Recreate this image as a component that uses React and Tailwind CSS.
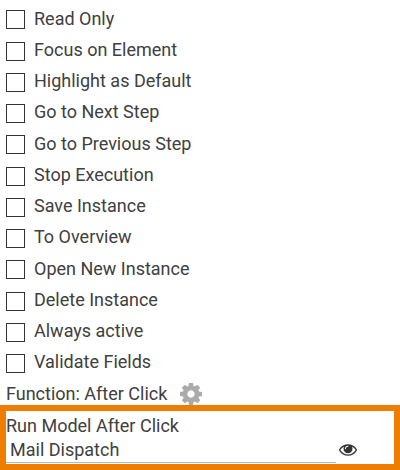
const options = [
  "Read Only",
  "Focus on Element",
  "Highlight as Default",
  "Go to Next Step",
  "Go to Previous Step",
  "Stop Execution",
  "Save Instance",
  "To Overview",
  "Open New Instance",
  "Delete Instance",
  "Always active",
  "Validate Fields",
];

function GearIcon() {
  return (
    <svg viewBox="128 128 1536 1536" className="mt-[4px] ml-[13px] h-[22px] w-[22px] shrink-0 fill-[#ababab]">
      <path d="M1152 896q0-106-75-181t-181-75-181 75-75 181 75 181 181 75 181-75 75-181zm512-109v222q0 12-8 23t-20 13l-185 28q-19 54-39 91 35 50 107 138 10 12 10 25t-9 23q-27 37-99 108t-94 71q-12 0-26-9l-138-108q-44 23-91 38-16 136-29 186-7 28-36 28h-222q-14 0-24.500-8.500t-11.500-21.500l-28-184q-49-16-90-37l-141 107q-10 9-25 9-14 0-25-11-126-114-165-168-7-10-7-23 0-12 8-23 15-21 51-66.500t54-70.500q-27-50-41-99l-183-27q-13-2-21-12.500t-8-23.500v-222q0-12 8-23t19-13l186-28q14-46 39-92-40-57-107-138-10-12-10-24 0-10 9-23 26-36 98.500-107.500t94.500-71.500q13 0 26 10l138 107q44-23 91-38 16-136 29-186 7-28 36-28h222q14 0 24.500 8.500t11.500 21.500l28 184q49 16 90 37l142-107q9-9 24-9 13 0 25 10 129 119 165 170 7 8 7 22 0 12-8 23-15 21-51 66.500t-54 70.500q26 50 41 98l183 28q13 2 21 12.500t8 23.500z" />
    </svg>
  );
}

function EyeIcon() {
  return (
    <svg viewBox="0 384 1792 1152" className="mt-[6px] ml-[3px] h-[12px] w-[18px] shrink-0 fill-[#333333]">
      <path d="M1664 960q-152-236-381-353 61 104 61 225 0 185-131.500 316.500t-316.500 131.500-316.500-131.500-131.500-316.500q0-121 61-225-229 117-381 353 133 205 333.500 326.500t434.500 121.500 434.500-121.500 333.500-326.500zm-720-384q0-20-14-34t-34-14q-125 0-214.500 89.500t-89.500 214.500q0 20 14 34t34 14 34-14 14-34q0-86 61-147t147-61q20 0 34-14t14-34zm848 384q0 34-20 69-140 230-376.500 368.500t-499.500 138.500-499.500-139-376.500-368q-20-35-20-69t20-69q140-229 376.500-368t499.500-139 499.500 139 376.500 368q20 35 20 69z" />
    </svg>
  );
}

export default function App() {
  return (
    <div className="flex h-[470px] w-[400px] flex-col overflow-hidden bg-white font-['Roboto',sans-serif] text-[18px] leading-[24px] text-[#404040]">
      <div className="flex h-[379px] shrink-0 flex-col pt-[6.6px] pl-[6px]">
        {options.map((label) => (
          <label key={label} className="flex h-[31.25px] shrink-0 items-start">
            <span className="mt-[3.8px] h-[19px] w-[19px] shrink-0 border border-[#333333] bg-white" />
            <span className="ml-[9px] whitespace-nowrap">{label}</span>
          </label>
        ))}
      </div>
      <div className="flex h-[26px] shrink-0 items-start pl-[6px]">
        <span className="mt-[3px] whitespace-nowrap">Function: After Click</span>
        <GearIcon />
      </div>
      <div className="flex h-[65px] shrink-0 flex-col border-[6px] border-[#ef7d00]">
        <div className="mt-[3px] h-[24px] whitespace-nowrap">Run Model After Click</div>
        <div className="flex h-[25px] items-start">
          <div className="h-[25px] w-[330px] border-b border-[#b8b8b8] pl-[4px]">Mail Dispatch</div>
          <EyeIcon />
        </div>
      </div>
    </div>
  );
}
